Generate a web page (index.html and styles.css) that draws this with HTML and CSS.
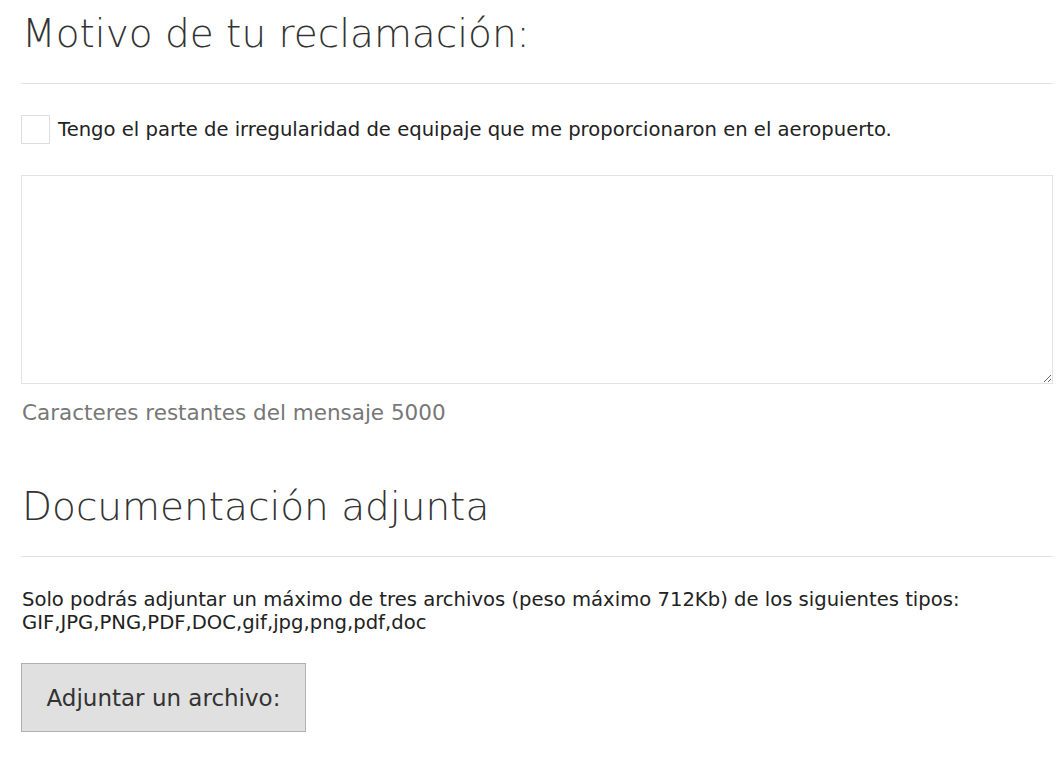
FILE: index.html
```html
<!DOCTYPE html>
<html lang="es">
<head>
  <meta charset="UTF-8" />
  <meta name="viewport" content="width=device-width, initial-scale=1" />
  <title>Reclamación de equipaje</title>
  <link rel="stylesheet" href="styles.css">
</head>
<body>
  <main class="form-reclamacion">
    <section>
      <h2 class="section-title">Motivo de tu reclamación:</h2>
      <label class="check-row">
        <input type="checkbox" class="check-box" />
        <span>Tengo el parte de irregularidad de equipaje que me proporcionaron en el aeropuerto.</span>
      </label>
      <textarea class="mensaje" maxlength="5000"></textarea>
      <p class="contador">Caracteres restantes del mensaje 5000</p>
    </section>

    <section class="adjuntos">
      <h2 class="section-title">Documentación adjunta</h2>
      <p class="nota">Solo podrás adjuntar un máximo de tres archivos (peso máximo 712Kb) de los siguientes tipos:<br>GIF,JPG,PNG,PDF,DOC,gif,jpg,png,pdf,doc</p>
      <button class="adjuntar-btn" type="button">Adjuntar un archivo:</button>
    </section>
  </main>
</body>
</html>
```

FILE: styles.css
```css
body {
  margin: 0;
  font-family: 'DejaVu Sans', Verdana, sans-serif;
  background: #fff;
  color: #222;
}
.form-reclamacion {
  padding: 0 7px 0 21px;
}
h2.section-title {
  font-size: 39px;
  font-weight: 200;
  color: #333;
  margin: 0;
  padding: 10px 0 25px 1px;
  border-bottom: 1px solid #e3e3e3;
  line-height: 48px;
}
.check-row {
  display: flex;
  align-items: center;
  gap: 8px;
  margin-top: 31px;
  font-size: 19.6px;
  color: #222;
}
.check-box {
  appearance: none;
  flex: none;
  margin: 0;
  width: 29px;
  height: 29px;
  border: 1px solid #ddd;
  background: #fff;
}
.mensaje {
  display: block;
  box-sizing: border-box;
  width: 100%;
  height: 209px;
  margin-top: 31px;
  border: 1px solid #e3e3e3;
  resize: vertical;
}
.contador {
  margin: 17px 0 0 1px;
  font-size: 21.5px;
  line-height: 24px;
  color: #777;
}
.adjuntos {
  margin-top: 48px;
}
.nota {
  margin: 31px 0 0 1px;
  font-size: 19.6px;
  line-height: 23px;
}
.adjuntar-btn {
  margin-top: 29px;
  width: 285px;
  height: 69px;
  padding: 0;
  background: #e0e0e0;
  border: 1px solid #b0b0b0;
  font-family: 'DejaVu Sans', Verdana, sans-serif;
  font-size: 23px;
  color: #333;
  cursor: pointer;
}
```
